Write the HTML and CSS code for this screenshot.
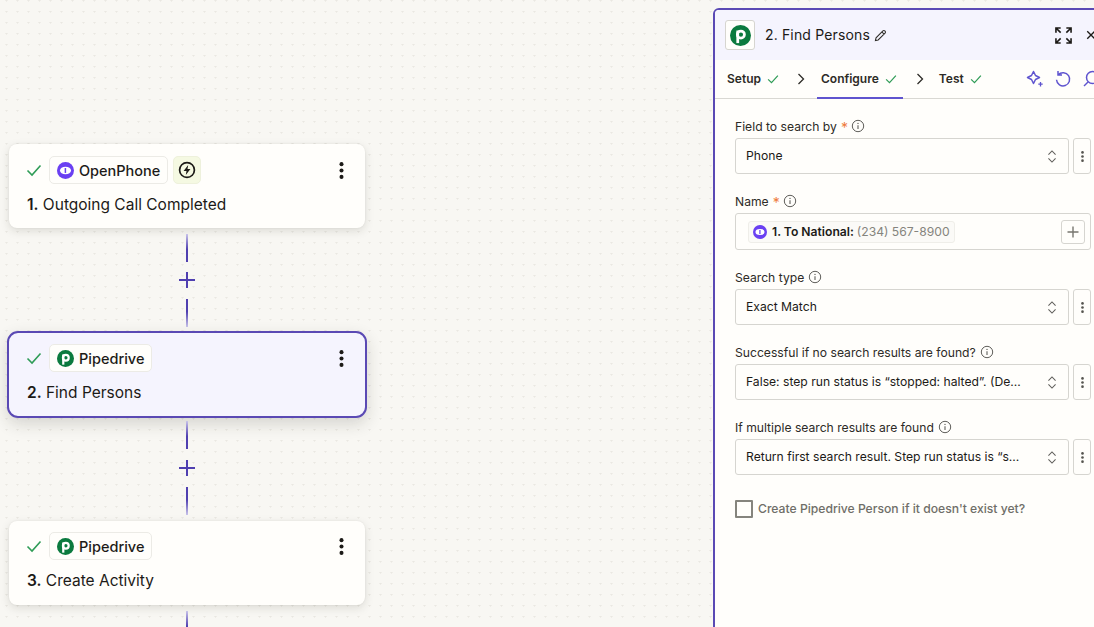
FILE: index.html
```html
<!DOCTYPE html>
<html lang="en">
<head>
<meta charset="utf-8">
<title>Find Persons</title>
<link rel="stylesheet" href="styles.css">
</head>
<body>
<svg class="defs" width="0" height="0" aria-hidden="true">
  <defs>
    <symbol id="openphone" viewBox="0 0 16 16">
      <circle cx="8" cy="8" r="8" fill="#6a40f2"/>
      <ellipse cx="8" cy="8" rx="5.200" ry="3.500" fill="#fff"/>
      <rect x="7.200" y="5.700" width="1.400" height="4.600" fill="#6a40f2"/>
    </symbol>
    <symbol id="pipedrive" viewBox="0 0 16 16">
      <circle cx="8" cy="8" r="8" fill="#0b7a3f"/>
      <path d="M5.900 13.800V4.200" fill="none" stroke="#fff" stroke-width="2.100"/>
      <circle cx="8.300" cy="7.300" r="2.700" fill="none" stroke="#fff" stroke-width="2.100"/>
    </symbol>
    <symbol id="check" viewBox="0 0 16 16">
      <path d="M1.500 8.500 6 13l8.500-9.500" fill="none" stroke="#2f9c57" stroke-width="1.600"/>
    </symbol>
    <symbol id="kebab" viewBox="0 0 4 16">
      <circle cx="2" cy="2" r="1.900" fill="currentColor"/><circle cx="2" cy="8" r="1.900" fill="currentColor"/><circle cx="2" cy="14" r="1.900" fill="currentColor"/>
    </symbol>
    <symbol id="info" viewBox="0 0 14 14">
      <circle cx="7" cy="7" r="5.700" fill="none" stroke="#5f5e5a" stroke-width="1"/>
      <path d="M7 6.300v3.600" stroke="#5f5e5a" stroke-width="1.100"/><circle cx="7" cy="4.400" r=".7" fill="#5f5e5a"/>
    </symbol>
    <symbol id="updown" viewBox="0 0 10 16">
      <path d="M1.200 6 5 2l3.800 4M1.200 10 5 14l3.800-4" fill="none" stroke="#5f5e5a" stroke-width="1.100"/>
    </symbol>
    <symbol id="chev" viewBox="0 0 8 12">
      <path d="M1.500 1 6.500 6l-5 5" fill="none" stroke="#2d2b27" stroke-width="1.300"/>
    </symbol>
  </defs>
</svg>

<main class="app">
  <section class="canvas">
    <article class="card">
      <div class="card-top">
        <svg class="status"><use href="#check"/></svg>
        <span class="pill"><svg class="logo"><use href="#openphone"/></svg>OpenPhone</span>
        <span class="bolt">
          <svg viewBox="0 0 18 18" width="18" height="18"><circle cx="9" cy="9" r="7.400" fill="none" stroke="#1c1a17" stroke-width="1.700"/><path d="M10.200 3.900 5.600 10h2.900l-.7 4.100 4.600-6.100H9.500z" fill="#1c1a17"/></svg>
        </span>
        <svg class="menu"><use href="#kebab"/></svg>
      </div>
      <h2 class="card-title"><b>1.</b> Outgoing Call Completed</h2>
    </article>

    <div class="connector">
      <span class="line line-top"></span>
      <svg class="plus" viewBox="0 0 16 16"><path d="M8 0v16M0 8h16" stroke="#4f3fb0" stroke-width="2"/></svg>
      <span class="line line-bottom"></span>
    </div>

    <article class="card card-active">
      <div class="card-top">
        <svg class="status"><use href="#check"/></svg>
        <span class="pill"><svg class="logo"><use href="#pipedrive"/></svg>Pipedrive</span>
        <svg class="menu"><use href="#kebab"/></svg>
      </div>
      <h2 class="card-title"><b>2.</b> Find Persons</h2>
    </article>

    <div class="connector">
      <span class="line line-top"></span>
      <svg class="plus" viewBox="0 0 16 16"><path d="M8 0v16M0 8h16" stroke="#4f3fb0" stroke-width="2"/></svg>
      <span class="line line-bottom"></span>
    </div>

    <article class="card">
      <div class="card-top">
        <svg class="status"><use href="#check"/></svg>
        <span class="pill"><svg class="logo"><use href="#pipedrive"/></svg>Pipedrive</span>
        <svg class="menu"><use href="#kebab"/></svg>
      </div>
      <h2 class="card-title"><b>3.</b> Create Activity</h2>
    </article>

    <div class="connector connector-end"><span class="line line-top"></span></div>
  </section>

  <aside class="panel">
    <header class="panel-head">
      <span class="app-box"><svg class="app-logo"><use href="#pipedrive"/></svg></span>
      <h1 class="panel-title">2. Find Persons</h1>
      <svg class="pencil" viewBox="0 0 14 14"><path d="M1.500 12.500l.7-3L9.600 2.100a1.400 1.400 0 0 1 2 0l.3.3a1.400 1.400 0 0 1 0 2L4.500 11.800zM8.500 3.200l2.300 2.300" fill="none" stroke="#2d2b27" stroke-width="1.100"/></svg>
      <svg class="expand" viewBox="0 0 18 18"><path d="M1 6V1h5M1 1l5 5M12 1h5v5M17 1l-5 5M1 12v5h5M1 17l5-5M17 12v5h-5M17 17l-5-5" fill="none" stroke="#1c1a17" stroke-width="1.700"/></svg>
      <svg class="close" viewBox="0 0 12 12"><path d="M1.500 1.500l9 9M10.500 1.500l-9 9" stroke="#1c1a17" stroke-width="1.600"/></svg>
    </header>

    <nav class="tabs">
      <span class="tab tab-first">Setup <svg class="tab-check"><use href="#check"/></svg></span>
      <svg class="tab-chev"><use href="#chev"/></svg>
      <span class="tab tab-on">Configure <svg class="tab-check"><use href="#check"/></svg></span>
      <svg class="tab-chev"><use href="#chev"/></svg>
      <span class="tab tab-last">Test <svg class="tab-check"><use href="#check"/></svg></span>
      <span class="tools">
        <svg viewBox="0 0 18 18"><path d="M7.500 1.500l2 4 4 2-4 2-2 4-2-4-4-2 4-2z" fill="none" stroke="#5f54cf" stroke-width="1.500" stroke-linejoin="round"/><path d="M14.500 12v4.500M12.300 14.200h4.400" stroke="#5f54cf" stroke-width="1.300"/></svg>
        <svg viewBox="0 0 18 18"><path d="M4.200 4.800A6.600 6.600 0 1 1 2.500 9.800M4 1v4h4" fill="none" stroke="#5f54cf" stroke-width="1.500"/></svg>
        <svg viewBox="0 0 18 18"><circle cx="10.500" cy="7.500" r="6" fill="none" stroke="#5f54cf" stroke-width="1.500"/><path d="M6 12l-4 4" stroke="#5f54cf" stroke-width="1.500"/></svg>
      </span>
    </nav>

    <form class="fields">
      <div class="field">
        <label class="label">Field to search by <i class="req">*</i> <svg class="info"><use href="#info"/></svg></label>
        <div class="row">
          <div class="select"><span class="value">Phone</span><svg class="updown"><use href="#updown"/></svg></div>
          <button type="button" class="more"><svg class="more-dots"><use href="#kebab"/></svg></button>
        </div>
      </div>

      <div class="field">
        <label class="label">Name <i class="req">*</i> <svg class="info"><use href="#info"/></svg></label>
        <div class="mapped">
          <span class="token"><svg class="token-logo"><use href="#openphone"/></svg><b>1. To National:</b> <span class="token-val">(234) 567-8900</span></span>
          <span class="add"><svg viewBox="0 0 12 12"><path d="M6 .5v11M.5 6h11" stroke="#77766f" stroke-width="1.400"/></svg></span>
        </div>
      </div>

      <div class="field">
        <label class="label">Search type <svg class="info"><use href="#info"/></svg></label>
        <div class="row">
          <div class="select"><span class="value">Exact Match</span><svg class="updown"><use href="#updown"/></svg></div>
          <button type="button" class="more"><svg class="more-dots"><use href="#kebab"/></svg></button>
        </div>
      </div>

      <div class="field">
        <label class="label">Successful if no search results are found? <svg class="info"><use href="#info"/></svg></label>
        <div class="row">
          <div class="select"><span class="value">False: step run status is “stopped: halted”. (De...</span><svg class="updown"><use href="#updown"/></svg></div>
          <button type="button" class="more"><svg class="more-dots"><use href="#kebab"/></svg></button>
        </div>
      </div>

      <div class="field">
        <label class="label">If multiple search results are found <svg class="info"><use href="#info"/></svg></label>
        <div class="row">
          <div class="select"><span class="value">Return first search result. Step run status is “s...</span><svg class="updown"><use href="#updown"/></svg></div>
          <button type="button" class="more"><svg class="more-dots"><use href="#kebab"/></svg></button>
        </div>
      </div>

      <div class="check-row">
        <span class="box"></span>
        <span class="check-label">Create Pipedrive Person if it doesn't exist yet?</span>
      </div>
    </form>
  </aside>
</main>
</body>
</html>
```

FILE: styles.css
```css
* { box-sizing: border-box; }
html, body { margin: 0; padding: 0; height: 100%; overflow: hidden; }
body {
  font-family: Inter, "Liberation Sans", sans-serif;
  color: #1c1a17;
  background-color: #f8f7f3;
  background-image: radial-gradient(circle at 6.5px 0.5px, #e9e8e2 0.9px, transparent 1.2px);
  background-size: 11px 11px;
}
.defs { position: absolute; }

.app { display: flex; width: 1094px; height: 627px; overflow: hidden; }

.canvas {
  flex: 0 0 713px;
  display: flex;
  flex-direction: column;
  align-items: flex-start;
  padding: 144px 0 0 9px;
}

.card {
  flex: none;
  width: 356px;
  height: 84px;
  padding: 12px 17px 0;
  background: #fffefb;
  border-radius: 8px;
  box-shadow: 0 3px 10px rgba(40, 35, 25, .13), 0 0 2px rgba(40, 35, 25, .08);
}
.card-active {
  width: 360px;
  height: 87px;
  margin-left: -2px;
  padding: 11px 17px 0;
  background: #f5f4fe;
  border: 2px solid #5a49b4;
  border-radius: 11px;
  box-shadow: 0 6px 16px rgba(40, 35, 25, .16);
}
.card-active + .connector + .card { padding-top: 11px; }

.card-top { display: flex; align-items: center; height: 28px; }
.status { width: 16px; height: 16px; margin-right: 7px; flex: none; }
.pill {
  display: flex;
  align-items: center;
  height: 28px;
  padding: 0 7px;
  gap: 5px;
  background: #fffefb;
  border: 1px solid #ecebe6;
  border-radius: 5px;
  font-size: 14.5px;
  font-weight: 500;
}
.logo { width: 17px; height: 17px; flex: none; }
.bolt {
  display: flex;
  align-items: center;
  justify-content: center;
  width: 28px;
  height: 28px;
  margin-left: 5px;
  background: #f5f9e2;
  border: 1px solid #eef1dc;
  border-radius: 5px;
}
.menu { width: 5px; height: 17px; margin-left: auto; margin-right: 4px; color: #1c1a17; }

.card-title {
  margin: 10px 0 0 1px;
  font-size: 15.5px;
  font-weight: 400;
  line-height: 22px;
}
.card-title b { font-weight: 600; }

.connector {
  flex: none;
  width: 356px;
  height: 103px;
  display: flex;
  flex-direction: column;
  align-items: center;
  padding-top: 6px;
}
.connector-end { height: 22px; }
.line { display: block; width: 2px; flex: none; }
.line-top { height: 28px; background: linear-gradient(#c9c4ea, #4f3fb0 55%); }
.line-bottom { height: 28px; background: linear-gradient(#4f3fb0 45%, #c9c4ea); }
.plus { width: 16px; height: 16px; margin: 10px 0 11px; flex: none; }
.card-active + .connector { padding-top: 3px; }
.card-active + .connector .plus { margin-top: 11px; }

.panel {
  flex: 0 0 400px;
  height: 640px;
  margin-top: 8px;
  background: #fffefb;
  border: 2px solid #5a49b4;
  border-radius: 6px;
}
.panel-head {
  display: flex;
  align-items: center;
  height: 50px;
  padding: 0 0 0 10px;
  background: #f5f4fe;
  border-radius: 4px 4px 0 0;
}
.app-box {
  display: flex;
  align-items: center;
  justify-content: center;
  width: 30px;
  height: 30px;
  background: #fffefb;
  border: 1px solid #d6d5d0;
  border-radius: 3px;
}
.app-logo { width: 21px; height: 21px; }
.panel-title {
  margin: 0 0 1px 10px;
  font-size: 14px;
  font-weight: 400;
  letter-spacing: .15px;
}
.pencil { width: 13px; height: 13px; margin-left: 4px; }
.expand { width: 17px; height: 17px; margin-left: 168px; }
.close { width: 10px; height: 10px; margin-left: 14px; }

.tabs {
  display: flex;
  align-items: center;
  height: 39px;
  padding-left: 12px;
  border-bottom: 1px solid #d9d8d3;
  font-size: 12px;
  font-weight: 600;
}
.tab {
  display: flex;
  align-items: center;
  align-self: stretch;
  gap: 6px;
  color: #2d2b27;
  margin-bottom: -1px;
  padding-bottom: 2px;
}
.tab-first { padding-right: 5px; }
.tab-on {
  margin-left: -1px;
  padding: 0 6px 0 4px;
  border-bottom: 2px solid #5f54cf;
}
.tab-last { padding-left: 2px; }
.tab-check { width: 12px; height: 12px; }
.tab-chev { width: 8px; height: 12px; margin: 0 13px 1px; flex: none; }
.tools { display: flex; align-items: center; gap: 10px; margin-left: 44px; }
.tools svg { width: 18px; height: 18px; flex: none; }

.fields { display: flex; flex-direction: column; gap: 18px; padding: 18px 0 0 20px; width: 376px; }
.field { display: flex; flex-direction: column; gap: 1px; }
.label {
  display: flex;
  align-items: center;
  gap: 4px;
  height: 20px;
  padding-bottom: 2px;
  font-size: 12.15px;
  font-weight: 400;
  color: #2d2b27;
}
.req { font-style: normal; font-size: 14px; line-height: 1; color: #ee7a3c; margin: 3px -1px 0 0; }
.info { width: 14px; height: 14px; }

.row { display: flex; gap: 4px; }
.select {
  flex: 1;
  display: flex;
  align-items: center;
  justify-content: space-between;
  height: 36px;
  padding: 0 11px 0 10px;
  border: 1px solid #d6d5d0;
  border-radius: 3px;
  background: #fffefb;
}
.value { font-size: 12.15px; color: #1c1a17; white-space: nowrap; margin-bottom: 2px; }
.updown { width: 10px; height: 15px; flex: none; }
.more {
  flex: 0 0 18px;
  display: flex;
  align-items: center;
  justify-content: center;
  height: 36px;
  padding: 0;
  border: 1px solid #d6d5d0;
  border-radius: 3px;
  background: #fffefb;
}
.more-dots { width: 3px; height: 11px; color: #55544f; }

.mapped {
  display: flex;
  align-items: center;
  justify-content: space-between;
  height: 37px;
  padding: 0 5px 0 12px;
  border: 1px solid #d6d5d0;
  border-radius: 3px;
}
.token {
  display: flex;
  align-items: center;
  gap: 5px;
  height: 22px;
  padding: 0 4px;
  background: #fbfaf7;
  border: 1px solid #efeee9;
  border-radius: 3px;
  font-size: 12.15px;
  white-space: pre;
}
.token b { font-weight: 600; }
.token-logo { width: 14px; height: 14px; flex: none; }
.token-val { color: #85847d; margin-left: -2px; }
.add {
  display: flex;
  align-items: center;
  justify-content: center;
  width: 24px;
  height: 24px;
  border: 1px solid #d6d5d0;
  border-radius: 3px;
}
.add svg { width: 12px; height: 12px; }

.check-row { display: flex; align-items: center; gap: 5px; margin-top: 7px; }
.box { width: 18px; height: 18px; border: 2px solid #85847d; border-radius: 1px; flex: none; }
.check-label { font-size: 12.15px; font-weight: 500; color: #6f6e68; white-space: nowrap; margin-bottom: 2px; }
```
